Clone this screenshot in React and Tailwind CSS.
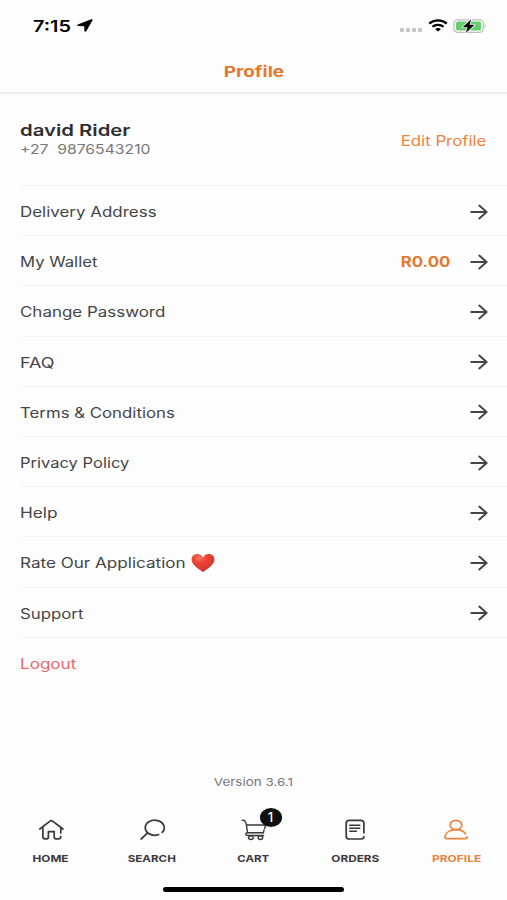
import { clsx } from 'clsx';

const menuItems = [
  { label: 'Delivery Address', stretch: 'scale-x-[1.21]' },
  { label: 'My Wallet', stretch: 'scale-x-[1.19]', value: 'R0.00' },
  { label: 'Change Password', stretch: 'scale-x-[1.21]' },
  { label: 'FAQ', stretch: 'scale-x-[1.28]' },
  { label: 'Terms & Conditions', stretch: 'scale-x-[1.2]' },
  { label: 'Privacy Policy', stretch: 'scale-x-[1.18]' },
  { label: 'Help', stretch: 'scale-x-[1.23]' },
  { label: 'Rate Our Application', stretch: 'scale-x-[1.22]', heart: true },
  { label: 'Support', stretch: 'scale-x-[1.2]' },
];

const tabs = [
  { label: 'HOME', icon: HomeIcon, stretch: 'scale-x-[1.24]' },
  { label: 'SEARCH', icon: SearchIcon, stretch: 'scale-x-[1.22]' },
  { label: 'CART', icon: CartIcon, stretch: 'scale-x-[1.21]', badge: 1 },
  { label: 'ORDERS', icon: OrdersIcon, stretch: 'scale-x-[1.24]' },
  { label: 'PROFILE', icon: ProfileIcon, stretch: 'scale-x-[1.26]', active: true },
];

function TabIcon({ children }) {
  return (
    <svg
      width="28"
      height="24"
      viewBox="0 0 28 24"
      fill="none"
      stroke="currentColor"
      strokeWidth="1.7"
      strokeLinecap="round"
      strokeLinejoin="round"
    >
      {children}
    </svg>
  );
}

function HomeIcon() {
  return (
    <TabIcon>
      <path d="M2.8 11 L13 3.1 Q14.3 2.2 15.6 3.1 L26 11" />
      <path d="M5.9 9.2 V18.8 Q5.9 20.8 8 20.8 H9.6 Q11.4 20.8 11.4 19 V13.6 H17.2 V19 Q17.2 20.8 19 20.8 H21.2 Q23.8 20.8 23.8 18.4" />
      <path d="M23.8 9.6 V15" />
    </TabIcon>
  );
}

function SearchIcon() {
  return (
    <TabIcon>
      <path d="M24.2 14.4 A9.5 7.5 0 1 0 20.6 16.6" />
      <path d="M9.4 15.2 L3.1 21" />
    </TabIcon>
  );
}

function CartIcon() {
  return (
    <TabIcon>
      <g strokeWidth="1.4">
        <path d="M2.3 2.3 C5.2 2.2 6 3.4 6.4 6.8 L7.6 14.8 H23.4" />
        <path d="M6.6 7 H25.8 L24.6 10.6 M24 12.2 L23.4 14.8" />
        <path d="M7.4 14.7 C5 15.2 5.2 17.5 7.6 17.5 H23.6" />
        <ellipse cx="10.9" cy="19.6" rx="2.3" ry="1.9" />
        <ellipse cx="20.4" cy="19.6" rx="2.3" ry="1.9" />
      </g>
    </TabIcon>
  );
}

function OrdersIcon() {
  return (
    <TabIcon>
      <path d="M22.9 14.8 V5.2 Q22.9 2.4 19.8 2.4 H8.4 Q5.2 2.4 5.2 5.2 V18.2 Q5.2 21 8.4 21 H20 Q22.9 21 22.9 18.6" />
      <path d="M8.8 7.3 H18.8 M8.8 10.3 H18.8 M8.8 13.3 H15.4" strokeWidth="1.5" />
    </TabIcon>
  );
}

function ProfileIcon() {
  return (
    <TabIcon>
      <ellipse cx="14" cy="7" rx="5.8" ry="4.7" />
      <path d="M23.6 15.8 C21.4 12.9 18 11.7 14 11.7 C8 11.7 3.8 14.6 2.9 18.6 Q2.7 20.7 4.8 20.7 H22.6 Q25 20.7 25.2 18.8" />
    </TabIcon>
  );
}

function ArrowRight() {
  return (
    <svg
      className="shrink-0"
      width="18"
      height="16"
      viewBox="0 0 18 16"
      fill="none"
      stroke="currentColor"
      strokeWidth="2"
      strokeLinecap="round"
      strokeLinejoin="round"
    >
      <path d="M1.3 8 H16 M9.3 1.6 L16.6 8 L9.3 14.4" />
    </svg>
  );
}

function Heart() {
  return (
    <svg width="24" height="20" viewBox="0 0 24 20">
      <defs>
        <radialGradient id="heart" cx="0.35" cy="0.2" r="0.85">
          <stop offset="0" stopColor="#f77866" />
          <stop offset="0.35" stopColor="#ee4335" />
          <stop offset="1" stopColor="#c9302a" />
        </radialGradient>
      </defs>
      <path
        d="M12 4.6 C10.6 1.8 8.6 1 6.4 1 C3 1 0.6 3.2 0.6 6.6 C0.6 11.6 6.6 15.2 12 19.2 C17.4 15.2 23.4 11.6 23.4 6.6 C23.4 3.2 21 1 17.6 1 C15.4 1 13.4 1.8 12 4.6 Z"
        fill="url(#heart)"
      />
    </svg>
  );
}

function StatusBar() {
  return (
    <div className="flex h-[51px] shrink-0 items-center justify-between pr-[20px] pl-[33px] text-black">
      <div className="flex items-center">
        <span className="w-[44px] origin-left scale-x-[1.24] text-[16px] leading-5 font-semibold">7:15</span>
        <svg width="16" height="13" viewBox="0 0 16 13" fill="currentColor">
          <path d="M14.2 0.3 L0.8 5.4 Q-0.4 6.4 1 7 L7.2 7.2 L7.4 12 Q8 13.2 9.2 12.2 L15.6 1.2 Q15.8 0 14.2 0.3 Z" />
        </svg>
      </div>
      <div className="flex items-center">
        <div className="mt-[8px] mr-[6px] flex gap-[2px] text-[#c4c4c6]">
          {[0, 1, 2, 3].map(i => (
            <span key={i} className="h-[4px] w-[4px] rounded-[1px] bg-current" />
          ))}
        </div>
        <svg width="20" height="13" viewBox="0 0 20 13" fill="none" stroke="currentColor">
          <path d="M1.2 4.6 C6 0.2 14 0.2 18.8 4.6" strokeWidth="2.3" />
          <path d="M4.4 7.8 C7.6 5.2 12.4 5.2 15.6 7.8" strokeWidth="2.1" />
          <path d="M7 10 Q10 8 13 10 L10 12.6 Z" fill="currentColor" stroke="none" />
        </svg>
        <svg className="ml-[5px]" width="34" height="16" viewBox="0 0 34 16">
          <rect x="0.8" y="1.8" width="29.5" height="12.6" rx="4" fill="#fdfdfd" stroke="#bdbdbf" strokeWidth="1.2" />
          <rect x="3" y="3.6" width="25.2" height="9" rx="2.2" fill="#65cf70" />
          <path d="M31.6 5.6 Q33.6 8 31.6 10.4 Z" fill="#a5a5a8" />
          <path
            d="M18.2 1.2 L9.6 9.2 H14.6 L12.8 15 L21.6 6.8 H16.6 Z"
            fill="#000"
            stroke="#fdfdfd"
            strokeWidth="1.6"
            paintOrder="stroke"
            strokeLinejoin="round"
          />
        </svg>
      </div>
    </div>
  );
}

function MenuRow({ item }) {
  return (
    <div className="flex h-[50.2px] items-center border-b border-[#f1f1f1] pt-[2px] pr-[19px]">
      <span className={clsx('-ml-px origin-left text-[14px] whitespace-nowrap text-[#454547]', item.stretch)}>
        {item.label}
      </span>
      {item.heart && <div className="ml-[35px]"><Heart /></div>}
      <div className="flex-1" />
      {item.value && (
        <span className="mr-[20px] origin-right scale-x-[1.2] text-[14px] font-bold text-[#e5782f]">{item.value}</span>
      )}
      <div className="text-[#454547]"><ArrowRight /></div>
    </div>
  );
}

function Tab({ tab }) {
  const Icon = tab.icon;
  return (
    <div className={clsx('flex flex-1 flex-col items-center', tab.active ? 'text-[#e9843f]' : 'text-[#39393b]')}>
      <div className="relative">
        <Icon />
        {tab.badge && (
          <span className="absolute -top-[10px] left-[20px] flex h-[19px] w-[22px] items-center justify-center rounded-[50%] bg-[#111] text-[13px] font-medium text-white">
            {tab.badge}
          </span>
        )}
      </div>
      <span className={clsx('mt-[10px] text-[9.5px] leading-[14px] font-bold', tab.stretch)}>{tab.label}</span>
    </div>
  );
}

export default function App() {
  return (
    <div className="flex h-[900px] w-[507px] flex-col overflow-hidden bg-[#fdfdfd] font-['Inter',sans-serif]">
      <StatusBar />

      {/* Page title */}
      <header className="flex h-[43px] shrink-0 items-center justify-center border-b-2 border-[#ececec] pt-[2px]">
        <h1 className="scale-x-[1.26] text-[15px] font-bold text-[#e5782f]">Profile</h1>
      </header>

      {/* User details */}
      <section className="ml-[21px] flex h-[92px] shrink-0 items-center justify-between border-b border-[#f1f1f1] pr-[21px]">
        <div className="-mt-[2px] -ml-px flex flex-col items-start">
          <h2 className="origin-left scale-x-[1.27] text-[16px] leading-5 font-semibold text-[#2e2e30]">david Rider</h2>
          <p className="origin-left scale-x-[1.21] text-[13px] leading-[18px] whitespace-pre text-[#77777a]">{'+27  9876543210'}</p>
        </div>
        <button className="origin-right scale-x-[1.2] pt-px text-[14px] text-[#e9843f]">Edit Profile</button>
      </section>

      {/* Menu */}
      <nav className="ml-[21px] shrink-0">
        {menuItems.map(item => (
          <MenuRow key={item.label} item={item} />
        ))}
        <div className="flex h-[50px] items-center pt-[2px]">
          <button className="-ml-px origin-left scale-x-[1.22] text-[14px] text-[#e26a6a]">Logout</button>
        </div>
      </nav>

      <div className="flex-1" />
      <p className="text-center text-[11px] leading-4 text-[#77777a]">
        <span className="inline-block scale-x-[1.22]">Version 3.6.1</span>
      </p>

      {/* Bottom tabs */}
      <nav className="mt-[28px] flex h-[47px] shrink-0">
        {tabs.map(tab => (
          <Tab key={tab.label} tab={tab} />
        ))}
      </nav>
      <div className="mx-auto mt-[22px] mb-[8px] h-[5px] w-[181px] shrink-0 rounded-full bg-black" />
    </div>
  );
}
